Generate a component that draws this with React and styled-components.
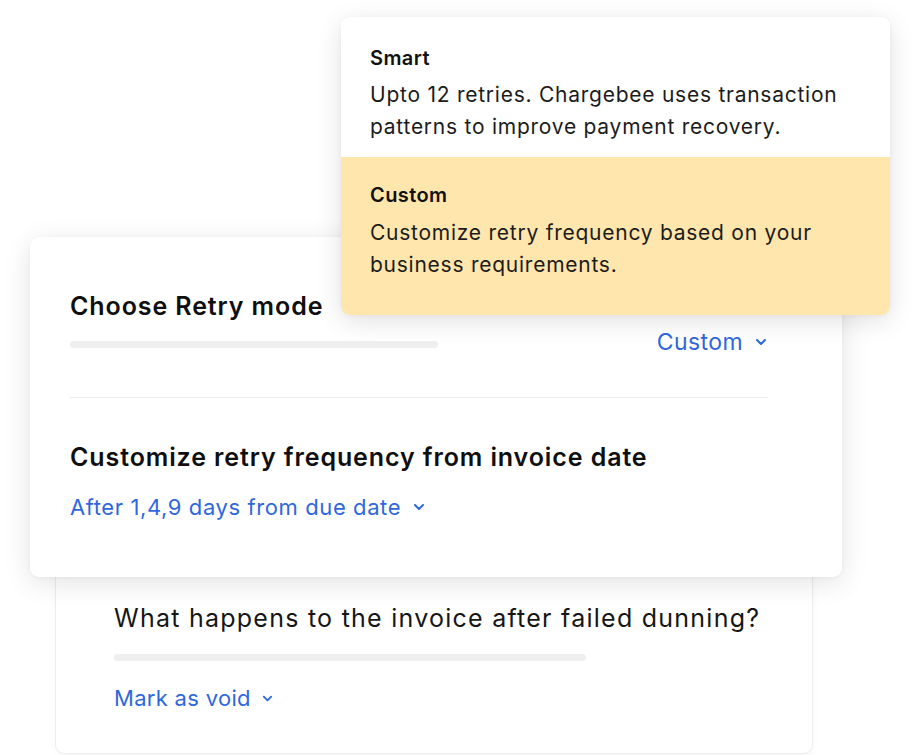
import React from "react";
import styled, { createGlobalStyle } from "styled-components";

const GlobalStyle = createGlobalStyle`
  html, body {
    margin: 0;
    padding: 0;
    background: #ffffff;
    font-family: Inter, "Noto Sans", "Liberation Sans", sans-serif;
    color: #141414;
    -webkit-font-smoothing: antialiased;
  }
`;

const Stage = styled.div`
  width: 918px;
  height: 755px;
  overflow: hidden;
  padding: 237px 0 0 30px;
  box-sizing: border-box;
  display: flex;
  flex-direction: column;
`;

// front card - retry settings
const Card = styled.section`
  position: relative;
  z-index: 2;
  width: 812px;
  box-sizing: border-box;
  padding: 54px 74px 56px 40px;
  background: #fff;
  border-radius: 9px;
  box-shadow: 0 6px 28px rgba(0, 0, 0, 0.11), 0 1px 4px rgba(0, 0, 0, 0.04);
`;

// card peeking out below the front one
const BackCard = styled.section`
  position: relative;
  z-index: 1;
  width: 758px;
  margin: -40px 0 0 25px;
  box-sizing: border-box;
  padding: 64px 30px 41px 58px;
  background: #fff;
  border: 1px solid #ededed;
  border-radius: 9px;
  box-shadow: 0 2px 8px rgba(0, 0, 0, 0.03);
`;

const Heading = styled.h2`
  margin: 0;
  font-size: 25px;
  line-height: 30px;
  font-weight: 600;
  letter-spacing: 0.9px;
  color: #0f0f0f;
  white-space: nowrap;
`;

const Question = styled.p`
  margin: 0;
  font-size: 25px;
  line-height: 32px;
  font-weight: 400;
  letter-spacing: 1.25px;
  color: #161616;
  white-space: nowrap;
`;

const Row = styled.div`
  display: flex;
  align-items: center;
  justify-content: space-between;
  height: 30px;
  margin-top: 6px;
`;

const Bar = styled.div`
  width: ${(p) => p.$width}px;
  height: 7px;
  border-radius: 4px;
  background: #efefef;
  margin-top: ${(p) => p.$top || 0}px;
`;

const Divider = styled.hr`
  border: 0;
  height: 1px;
  background: #ececec;
  margin: 40px 0 44px;
`;

const Select = styled.button`
  display: inline-flex;
  align-items: center;
  gap: ${(p) => p.$gap || 11}px;
  padding: 0;
  margin-top: ${(p) => p.$top || 0}px;
  border: 0;
  background: none;
  font-family: inherit;
  font-size: ${(p) => p.$size || 22}px;
  letter-spacing: ${(p) => p.$spacing || 0.6}px;
  line-height: 28px;
  color: #2f68dc;
  cursor: pointer;
  white-space: nowrap;
`;

const Menu = styled.div`
  position: absolute;
  left: 311px;
  top: -220px;
  width: 549px;
  border-radius: 9px;
  overflow: hidden;
  background: #fff;
  box-shadow: 0 6px 26px rgba(0, 0, 0, 0.12), 0 1px 4px rgba(0, 0, 0, 0.04);
`;

const Option = styled.div`
  padding: ${(p) => (p.$selected ? "26px 29px 34px" : "29px 29px 14px")};
  background: ${(p) => (p.$selected ? "#ffe6ad" : "#fff")};
`;

const OptionTitle = styled.div`
  font-size: 20px;
  line-height: 24px;
  font-weight: 600;
  letter-spacing: 0.4px;
  color: #111;
`;

const OptionText = styled.div`
  margin-top: ${(p) => (p.$selected ? 10 : 9)}px;
  font-size: 21px;
  line-height: 32px;
  letter-spacing: 0.75px;
  color: #1c1c1c;
`;

const Chevron = ({ size = 14 }) => (
  <svg width={size} height={size} viewBox="0 0 14 14" fill="none">
    <polyline
      points="3,5 7,9 11,5"
      stroke="currentColor"
      strokeWidth="2"
      strokeLinecap="round"
      strokeLinejoin="round"
    />
  </svg>
);

const options = [
  {
    title: "Smart",
    text: "Upto 12 retries. Chargebee uses transaction patterns to improve payment recovery.",
  },
  {
    title: "Custom",
    text: "Customize retry frequency based on your business requirements.",
    selected: true,
  },
];

export default function App() {
  return (
    <>
      <GlobalStyle />
      <Stage>
        <Card>
          <Heading>Choose Retry mode</Heading>
          <Row>
            <Bar $width={368} $top={4} />
            <Select $size={23} $spacing={0.4}>
              Custom <Chevron />
            </Select>
          </Row>
          <Divider />
          <Heading>Customize retry frequency from invoice date</Heading>
          <Select $top={21}>
            After 1,4,9 days from due date <Chevron />
          </Select>

          <Menu>
            {options.map((o) => (
              <Option key={o.title} $selected={o.selected}>
                <OptionTitle>{o.title}</OptionTitle>
                <OptionText $selected={o.selected}>{o.text}</OptionText>
              </Option>
            ))}
          </Menu>
        </Card>

        <BackCard>
          <Question>What happens to the invoice after failed dunning?</Question>
          <Bar $width={472} $top={20} />
          <Select $top={23} $gap={10} $size={22} $spacing={0.3}>
            Mark as void <Chevron size={13} />
          </Select>
        </BackCard>
      </Stage>
    </>
  );
}
